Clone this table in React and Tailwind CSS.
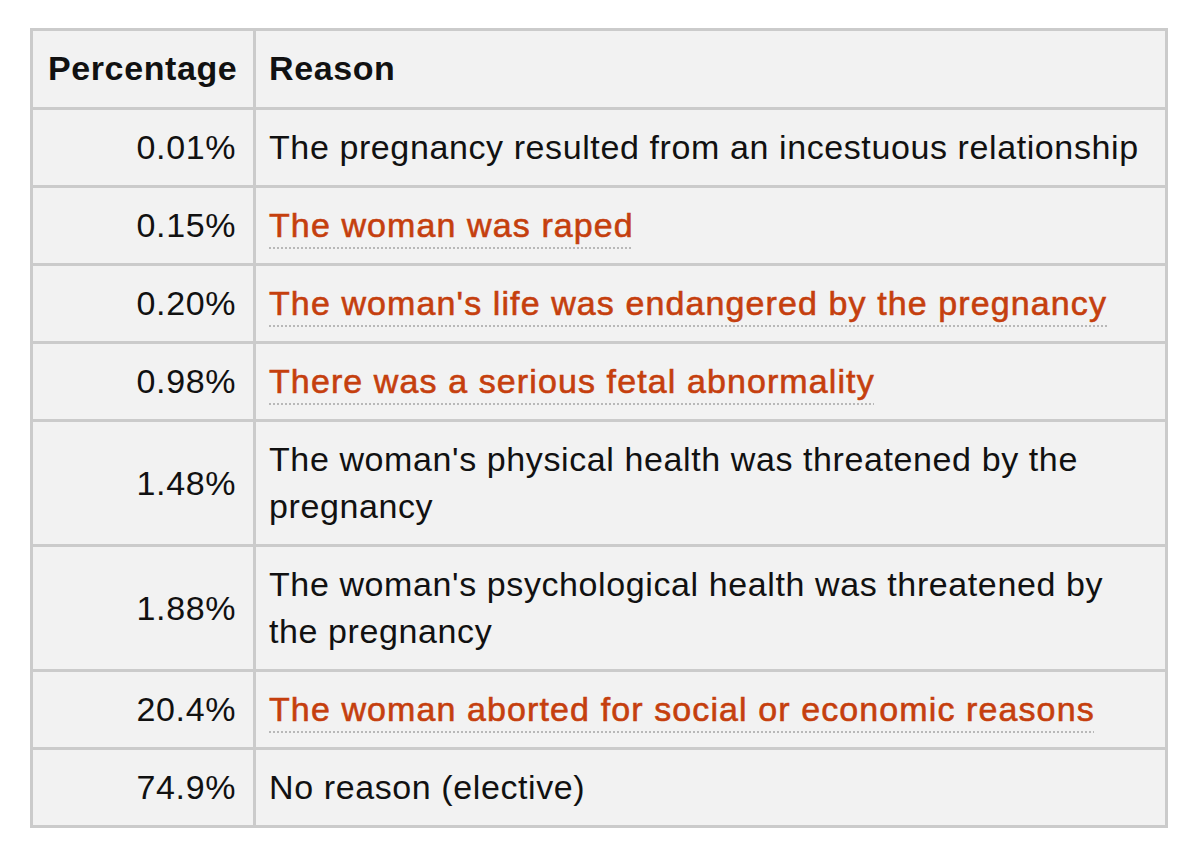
const rows = [
  { pct: '0.01%', reason: 'The pregnancy resulted from an incestuous relationship' },
  { pct: '0.15%', reason: 'The woman was raped', link: true },
  { pct: '0.20%', reason: "The woman's life was endangered by the pregnancy", link: true },
  { pct: '0.98%', reason: 'There was a serious fetal abnormality', link: true },
  { pct: '1.48%', reason: "The woman's physical health was threatened by the pregnancy" },
  { pct: '1.88%', reason: "The woman's psychological health was threatened by the pregnancy" },
  { pct: '20.4%', reason: 'The woman aborted for social or economic reasons', link: true },
  { pct: '74.9%', reason: 'No reason (elective)' },
];

const App = () => {
  return (
    <div className="bg-white w-[1200px] h-[855px] pt-[28px] pl-[30px] font-['Liberation_Sans',Arial,sans-serif] text-[34px] leading-[47px] tracking-[0.6px] text-[#111]">
      <table className="border-collapse bg-[#f2f2f2] w-[1138px]">
        <thead>
          <tr>
            <th className="border-[3px] border-[#cbcbcb] w-[223px] pl-[15px] pr-[12px] pt-[14px] pb-[15px] text-left font-bold">
              Percentage
            </th>
            <th className="border-[3px] border-[#cbcbcb] px-[13px] pt-[14px] pb-[15px] text-left font-bold">Reason</th>
          </tr>
        </thead>
        <tbody>
          {rows.map((r) => (
            <tr key={r.pct}>
              <td className="border-[3px] border-[#cbcbcb] pl-[14px] pr-[17px] py-[14px] text-right align-middle">{r.pct}</td>
              <td className="border-[3px] border-[#cbcbcb] pl-[13px] pr-[20px] py-[14px] text-left">
                {r.link ? (
                  <a className="text-[#c53f0e] tracking-[1.1px] [-webkit-text-stroke:0.6px_#c53f0e] underline decoration-dotted decoration-[#b8b8b8] decoration-2 underline-offset-[10px]">
                    {r.reason}
                  </a>
                ) : (
                  r.reason
                )}
              </td>
            </tr>
          ))}
        </tbody>
      </table>
    </div>
  );
};

export default App;
